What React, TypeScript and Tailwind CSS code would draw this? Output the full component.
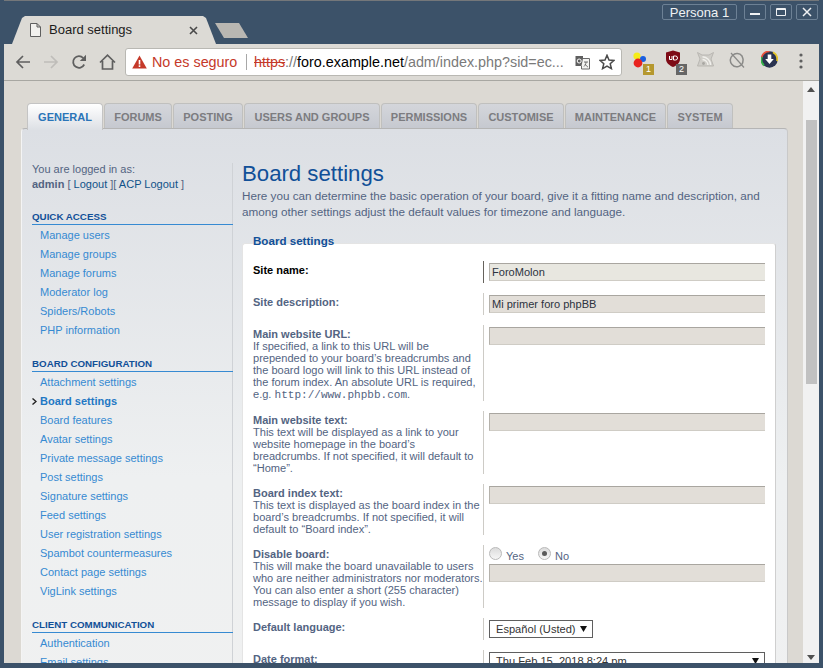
import React from "react";

const TABS = [
  { label: "FORUMS", w: "w-[68px]" },
  { label: "POSTING", w: "w-[70px]" },
  { label: "USERS AND GROUPS", w: "w-[136px]" },
  { label: "PERMISSIONS", w: "w-[96px]" },
  { label: "CUSTOMISE", w: "w-[86px]" },
  { label: "MAINTENANCE", w: "w-[101px]" },
  { label: "SYSTEM", w: "w-[66px]" },
];

const MENU = [
  {
    title: "Quick access",
    links: ["Manage users", "Manage groups", "Manage forums", "Moderator log", "Spiders/Robots", "PHP information"],
  },
  {
    title: "Board configuration",
    links: [
      "Attachment settings",
      "Board settings",
      "Board features",
      "Avatar settings",
      "Private message settings",
      "Post settings",
      "Signature settings",
      "Feed settings",
      "User registration settings",
      "Spambot countermeasures",
      "Contact page settings",
      "VigLink settings",
    ],
  },
  {
    title: "Client communication",
    links: ["Authentication", "Email settings"],
  },
];

function WindowButton({ children, wide }: { children: React.ReactNode; wide?: boolean }) {
  return (
    <div
      className={`h-[16px] ${wide ? "w-[75px] mr-[7px]" : "w-[22px] mr-[4px]"} flex items-center justify-center rounded-[2px] border border-[#6d8195] text-[#f0f2f4] text-[13px] leading-none`}
    >
      {children}
    </div>
  );
}

function Extensions() {
  return (
    <div className="flex items-center ml-[11px] h-[36px]">
      <div className="relative w-[32px] h-[24px]">
        <svg width="24" height="24" viewBox="0 0 24 24">
          <circle cx="4" cy="6" r="3.6" fill="#f5ec1a" />
          <circle cx="10" cy="9" r="3" fill="#1a5fe0" />
          <circle cx="5" cy="13" r="4.4" fill="#e8231e" />
        </svg>
        <span className="absolute left-[10px] top-[14px] w-[11px] h-[11px] bg-[#b5982f] text-white text-[9px] leading-[11px] text-center">1</span>
      </div>
      <div className="relative w-[32px] h-[24px]">
        <svg width="16" height="18" viewBox="0 0 16 18">
          <path d="M8 0.5 L15 2.5 V9 C15 13 11.5 15.5 8 17 C4.5 15.5 1 13 1 9 V2.5 Z" fill="#7d0b16" />
          <path d="M4.5 6 V9.5 H7 V6 M8.5 10 V6 H10.5 A2 2 0 0 1 10.5 10 Z" fill="none" stroke="#fff" strokeWidth="1" />
        </svg>
        <span className="absolute left-[11px] top-[14px] w-[11px] h-[11px] bg-[#666666] text-white text-[9px] leading-[11px] text-center">2</span>
      </div>
      <div className="w-[32px] h-[24px] flex items-start">
        <svg width="17" height="15" viewBox="0 0 17 15" className="mt-[2px]">
          <path d="M0.5 0.5 L5 3 H12 L16.5 0.5 L14 7 L16.5 14 H0.5 L3 7 Z" fill="#cfcdc8" stroke="#b9b7b2" />
          <circle cx="6.5" cy="11.5" r="1.4" fill="#a9a7a2" />
          <path d="M5.5 7.5 A6 6 0 0 1 11 13 M5.5 4.8 A8.5 8.5 0 0 1 13.6 13" fill="none" stroke="#f1f0ec" strokeWidth="1.4" />
        </svg>
      </div>
      <div className="w-[32px] h-[24px] flex items-start">
        <svg width="16" height="16" viewBox="0 0 16 16" className="mt-[2px]">
          <path d="M3.5 3.5 A6.2 6.2 0 0 1 13 4 C13.5 6 14.5 7 14 8.5 A6.2 6.2 0 0 1 3 12.5 A6.2 6.2 0 0 1 3.5 3.5 Z" fill="none" stroke="#8a8a88" strokeWidth="1.5" />
          <path d="M2 1 L15 15.5" stroke="#8a8a88" strokeWidth="1.2" />
        </svg>
      </div>
      <div className="w-[38px] h-[24px] flex items-start">
        <svg width="17" height="17" viewBox="0 0 17 17" className="mt-[1px]">
          <circle cx="8.5" cy="8.5" r="8.2" fill="#2a3350" />
          <path d="M8.5 0.3 A8.2 8.2 0 0 0 0.6 6.5" fill="none" stroke="#e8503a" strokeWidth="1.8" />
          <path d="M0.8 6 A8.2 8.2 0 0 0 3 14.5" fill="none" stroke="#36b24a" strokeWidth="1.8" />
          <path d="M12 1.2 A8.2 8.2 0 0 1 16 10" fill="none" stroke="#e5c62a" strokeWidth="1.8" />
          <path d="M6.7 3.5 H10.3 V8 H12.8 L8.5 13 L4.2 8 H6.7 Z" fill="#fff" />
        </svg>
      </div>
      <svg width="4" height="16" viewBox="0 0 4 16" className="mb-[2px]">
        <circle cx="2" cy="2" r="1.6" fill="#5f5f5f" />
        <circle cx="2" cy="8" r="1.6" fill="#5f5f5f" />
        <circle cx="2" cy="14" r="1.6" fill="#5f5f5f" />
      </svg>
    </div>
  );
}

function Toolbar() {
  return (
    <div className="h-[37px] shrink-0 flex items-center bg-[#dcdad5] border-b border-[#a8a7a2] pl-[11px]">
      <svg width="16" height="16" viewBox="0 0 16 16" className="mr-[12px]">
        <path d="M15 8 H2 M8 2 L2 8 L8 14" fill="none" stroke="#5f5f5f" strokeWidth="1.7" />
      </svg>
      <svg width="16" height="16" viewBox="0 0 16 16" className="mr-[12px]">
        <path d="M1 8 H14 M8 2 L14 8 L8 14" fill="none" stroke="#bfbdb9" strokeWidth="1.7" />
      </svg>
      <svg width="16" height="16" viewBox="0 0 16 16" className="mr-[12px]">
        <path d="M13.2 10.5 A5.8 5.8 0 1 1 12.2 4" fill="none" stroke="#5f5f5f" strokeWidth="1.8" />
        <path d="M15 0.8 V7 H8.8 Z" fill="#5f5f5f" />
      </svg>
      <svg width="17" height="16" viewBox="0 0 17 16" className="mr-[9px]">
        <path d="M1 8.5 L8.5 1.2 L16 8.5 M3.5 7 V15 H13.5 V7" fill="none" stroke="#5f5f5f" strokeWidth="1.7" />
      </svg>
      <div className="w-[497px] h-[28px] flex items-center bg-white border border-[#b9b8b3] rounded-[3px] text-[14.35px] whitespace-nowrap pl-[6px]">
        <svg width="15" height="14" viewBox="0 0 15 14" className="mr-[5px]">
          <path d="M7.5 0.5 L14.8 13.5 H0.2 Z" fill="#c53929" />
          <rect x="6.7" y="5" width="1.6" height="4.5" fill="#fff" />
          <rect x="6.7" y="10.3" width="1.6" height="1.7" fill="#fff" />
        </svg>
        <span className="text-[#c53929] w-[94px] mt-[2px]">No es seguro</span>
        <span className="w-px h-[16px] bg-[#a8a8a8] mr-[7px]" />
        <span className="text-[#c53929] line-through mt-[2px]">https</span>
        <span className="text-[#7a7a7a] mt-[2px]">://</span>
        <span className="text-black mt-[2px]">foro.example.net</span>
        <span className="text-[#7a7a7a] mt-[2px]">/adm/index.php?sid=ec...</span>
        <div className="ml-auto flex items-center">
          <svg width="15" height="15" viewBox="0 0 15 15" className="mr-[9px]">
            <path d="M0.5 1 H8 V11 H0.5 Z" fill="#5f5f5f" />
            <path d="M8 3.5 H14.5 V14 H6.5 L6.5 11" fill="#f4f4f2" stroke="#6a6a6a" />
            <circle cx="4.2" cy="6" r="2" fill="none" stroke="#fff" />
            <path d="M9 7 H13 M11 7 C11 9 10 10.5 9 11.5 M10 9 C10.5 10 12 11.5 13 12" fill="none" stroke="#5f5f5f" strokeWidth="0.9" />
          </svg>
          <svg width="16" height="16" viewBox="0 0 16 16" className="mr-[6px]">
            <path d="M8 1.3 L10 6 L15 6.4 L11.2 9.7 L12.4 14.6 L8 12 L3.6 14.6 L4.8 9.7 L1 6.4 L6 6 Z" fill="none" stroke="#4a4a4a" strokeWidth="1.5" />
          </svg>
        </div>
      </div>
      <Extensions />
    </div>
  );
}

function TitleBar() {
  return (
    <div className="h-[44px] shrink-0 flex justify-between items-start border-t border-[#74777a]">
      <div className="flex items-end h-full pl-[8px]">
        <div className="w-[204px] h-[28px] bg-[#dcdad5] [clip-path:polygon(0_100%,10px_2px,13px_0,191px_0,194px_2px,100%_100%)] flex items-center pl-[18px] text-[13px] text-[#1c1c1c]">
          <svg width="11" height="14" viewBox="0 0 11 14" className="mr-[8px]">
            <path d="M0.5 0.5 H7 L10.5 4 V13.5 H0.5 Z M7 0.5 V4 H10.5" fill="#f2f1ee" stroke="#5f5f5f" />
          </svg>
          <span>Board settings</span>
          <svg width="9" height="9" viewBox="0 0 9 9" className="ml-[57px]">
            <path d="M1 1 L8 8 M8 1 L1 8" stroke="#4a4a4a" strokeWidth="1.6" />
          </svg>
        </div>
        <div className="w-[33px] h-[15px] mb-[6px] -ml-[1px] bg-[#b9b7b2] [clip-path:polygon(0_0,24px_0,100%_100%,9px_100%)]" />
      </div>
      <div className="flex items-center pt-[3px] mr-[-3px]">
        <WindowButton wide>Persona 1</WindowButton>
        <WindowButton>
          <span className="w-[10px] h-[2px] bg-[#f0f2f4] mt-[4px]" />
        </WindowButton>
        <WindowButton>
          <span className="w-[10px] h-[8px] border border-t-2 border-[#f0f2f4] rounded-[1px]" />
        </WindowButton>
        <WindowButton>
          <svg width="10" height="10" viewBox="0 0 10 10">
            <path d="M1 1 L9 9 M9 1 L1 9" stroke="#f0f2f4" strokeWidth="1.5" />
          </svg>
        </WindowButton>
      </div>
    </div>
  );
}

function Tabs() {
  return (
    <div className="flex items-start ml-[23px] h-[25px] gap-[1px] relative z-10 text-[11px] font-bold">
      <div className="w-[76px] h-[27px] flex items-center justify-center pt-px rounded-t-[4px] border border-b-0 border-[#c4c4c4] bg-gradient-to-b from-white to-[#dde0e5] text-[#2a75b8]">
        GENERAL
      </div>
      {TABS.map((t) => (
        <div
          key={t.label}
          className={`${t.w} h-[25px] flex items-center justify-center pt-[2px] rounded-t-[4px] border border-b-0 border-[#c0c0be] bg-gradient-to-b from-[#d4d6db] to-[#c6c9d0] text-[#7c7c80]`}
        >
          {t.label}
        </div>
      ))}
    </div>
  );
}

function Sidebar() {
  return (
    <div className="w-[201px] shrink-0 border-r border-[#cfd2d6] text-[11px] leading-[15px] text-[#536482]">
      <p className="h-[15px] mt-[-1px]">You are logged in as:</p>
      <p className="h-[15px]">
        <b>admin</b> [ <span className="text-[#105289]">Logout</span> ][ <span className="text-[#105289]">ACP Logout</span> ]
      </p>
      <div className="pt-px">
        {MENU.map((group) => (
          <div key={group.title} className="mt-[19px]">
            <h3 className="text-[9.75px] font-bold uppercase leading-[10px] h-[13px] text-[#115098] border-b border-[#368ad2] mr-[-1px]">
              {group.title}
            </h3>
            <ul className="pt-[1px]">
              {group.links.map((link) => {
                const active = link === "Board settings";
                return (
                  <li key={link} className="relative h-[19px] pl-[8px] leading-[19px] text-[#368ad2]">
                    {active && (
                      <svg width="5" height="7" viewBox="0 0 5 7" className="absolute left-0 top-[6px]">
                        <path d="M0.5 0.5 L4 3.5 L0.5 6.5" fill="none" stroke="#222" strokeWidth="1.4" />
                      </svg>
                    )}
                    <span className={active ? "font-bold text-[#1f78c4]" : ""}>{link}</span>
                  </li>
                );
              })}
            </ul>
          </div>
        ))}
      </div>
    </div>
  );
}

function Row({
  title,
  desc,
  h,
  strong,
  children,
}: {
  title: string;
  desc?: React.ReactNode;
  h: string;
  strong?: boolean;
  children: React.ReactNode;
}) {
  return (
    <div className={`flex ${h} shrink-0`}>
      <div className="w-[230px] shrink-0 pt-[3px] text-[11px] leading-[12px] text-[#536482]">
        <b className={strong ? "text-black" : ""}>{title}</b>
        {desc && <div className="text-[11.05px]">{desc}</div>}
      </div>
      <div className={`flex-1 border-l ${strong ? "border-[#66625c]" : "border-[#cdcbc6]"} pl-[5px] pt-[2px]`}>{children}</div>
    </div>
  );
}

function TextInput({ value, focus }: { value?: string; focus?: boolean }) {
  return (
    <input
      readOnly
      value={value ?? ""}
      className={`block w-[276px] h-[18px] pl-[2px] text-[11.05px] text-[#2d3340] outline-none border-t border-l border-b border-t-[#a9a6a0] border-l-[#b5b2ab] border-b-[#cfccc5] ${focus ? "bg-[#e8e7e0]" : "bg-[#e2ded8]"}`}
    />
  );
}

function SelectBox({ value, w }: { value: string; w: string }) {
  return (
    <div className={`${w} h-[18px] flex items-center justify-between pl-[6px] pr-[5px] border border-[#5f5f5f] bg-white text-[11.1px] text-[#333333]`}>
      <span>{value}</span>
      <svg width="7" height="6" viewBox="0 0 7 6">
        <path d="M0 0 H7 L3.5 6 Z" fill="#111" />
      </svg>
    </div>
  );
}

function Radio({ label, checked }: { label: string; checked?: boolean }) {
  return (
    <div className="flex items-start gap-[4px] text-[11px] leading-[12px] text-[#536482]">
      <span className="w-[13px] h-[13px] rounded-full border border-[#b9b9b9] bg-gradient-to-b from-[#dcdcdc] to-[#f6f6f6] flex items-center justify-center">
        {checked && <span className="w-[5px] h-[5px] rounded-full bg-[#5a5a5a]" />}
      </span>
      <span className="pt-[3px]">{label}</span>
    </div>
  );
}

function Content() {
  return (
    <div className="flex-1 min-w-0 pl-[9px] pr-[11px] mt-[-2px]">
      <h1 className="text-[22.2px] leading-[26px] text-[#115098]">Board settings</h1>
      <p className="text-[11.7px] leading-[16px] text-[#536482] mt-[1px] whitespace-nowrap">
        Here you can determine the basic operation of your board, give it a fitting name and description, and
        <br />
        among other settings adjust the default values for timezone and language.
      </p>
      <div className="relative z-10 ml-[11px] mt-[14px] h-[13px] leading-[13px] text-[11.6px] font-bold text-[#115098]">Board settings</div>
      <div className="-mt-[4px] rounded-t-[3px] border border-b-0 border-[#e4e4e4] border-r-[#cfcfcf] bg-white pl-[10px] pr-[9px] pt-[17px] flex flex-col gap-[10px]">
        <Row title="Site name:" h="h-[22px]" strong>
          <TextInput value="ForoMolon" focus />
        </Row>
        <Row title="Site description:" h="h-[22px]">
          <TextInput value="Mi primer foro phpBB" />
        </Row>
        <Row
          title="Main website URL:"
          h="h-[76px]"
          desc={
            <>
              If specified, a link to this URL will be prepended to your board’s breadcrumbs and the board logo will link to this URL instead of the forum index. An absolute URL is required, e.g. <span className="font-['Liberation_Mono',monospace]">http://www.phpbb.com</span>.
            </>
          }
        >
          <TextInput />
        </Row>
        <Row
          title="Main website text:"
          h="h-[63px]"
          desc="This text will be displayed as a link to your website homepage in the board’s breadcrumbs. If not specified, it will default to “Home”."
        >
          <TextInput />
        </Row>
        <Row
          title="Board index text:"
          h="h-[51px]"
          desc="This text is displayed as the board index in the board’s breadcrumbs. If not specified, it will default to “Board index”."
        >
          <TextInput />
        </Row>
        <Row
          title="Disable board:"
          h="h-[63px]"
          desc="This will make the board unavailable to users who are neither administrators nor moderators. You can also enter a short (255 character) message to display if you wish."
        >
          <div className="flex gap-[14px] h-[17px]">
            <Radio label="Yes" />
            <Radio label="No" checked />
          </div>
          <TextInput />
        </Row>
        <Row title="Default language:" h="h-[22px]">
          <SelectBox value="Español (Usted)" w="w-[104px]" />
        </Row>
        <Row title="Date format:" h="h-[22px]">
          <SelectBox value="Thu Feb 15, 2018 8:24 pm" w="w-[276px]" />
        </Row>
      </div>
    </div>
  );
}

function Scrollbar() {
  return (
    <div className="w-[16px] shrink-0 bg-[#f1f1f1] flex flex-col items-center">
      <svg width="8" height="5" viewBox="0 0 8 5" className="mt-[6px]">
        <path d="M0 5 L4 0 L8 5 Z" fill="#505050" />
      </svg>
      <div className="w-[11px] h-[264px] mt-[28px] bg-[#c1c1c1]" />
      <svg width="8" height="5" viewBox="0 0 8 5" className="mt-auto mb-[3px]">
        <path d="M0 0 L4 5 L8 0 Z" fill="#505050" />
      </svg>
    </div>
  );
}

export default function App() {
  return (
    <div className="h-[668px] w-[823px] overflow-hidden flex flex-col bg-[#3c5269] border-x-[4px] border-b-[5px] border-[#3c5269] font-['Liberation_Sans',sans-serif]">
      <TitleBar />
      <Toolbar />
      <div className="flex-1 min-h-0 flex">
        <div className="flex-1 min-w-0 overflow-hidden bg-[#dcd9d3] pt-[22px]">
          <Tabs />
          <div className="ml-[17px] mr-[15px] h-[700px] rounded-t-[4px] border border-[#f4f4f4] border-r-[#c9c9c9] border-t-[#b5b5b5] bg-gradient-to-b from-[#dcdfe4] via-[#eef0f1] via-50% to-[#f1f1f1] pt-[34px] pl-[10px] flex">
            <Sidebar />
            <Content />
          </div>
        </div>
        <Scrollbar />
      </div>
    </div>
  );
}
